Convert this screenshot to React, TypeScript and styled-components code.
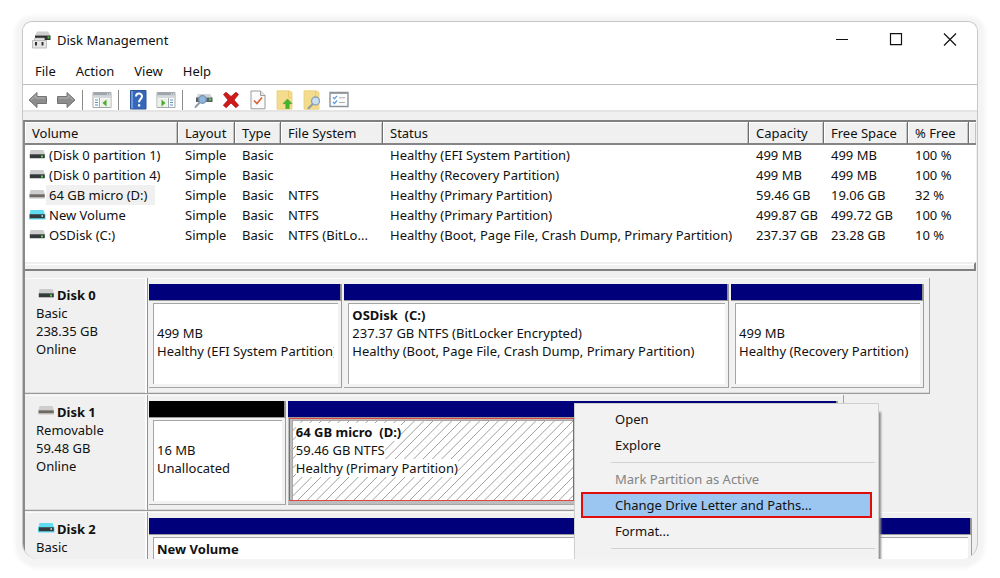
import React from 'react';
import styled, { createGlobalStyle, css } from 'styled-components';

const Global = createGlobalStyle`
  *, *::before, *::after { box-sizing: border-box; }
  body {
    margin: 0;
    background: #fff;
    color: #111;
    font: 13px/18px "Noto Sans", "Open Sans", sans-serif;
  }
  button { margin: 0; padding: 0; border: 0; background: none; color: inherit; font: inherit; }
  svg { display: block; flex: none; }
`;

const Desktop = styled.div`
  display: flex;
  height: 100vh;
  padding: 21px 22px 19px;
`;

const Window = styled.main`
  position: relative;
  display: flex;
  flex: 1;
  flex-direction: column;
  min-width: 0;
  overflow: hidden;
  border: 1px solid #c6c6c6;
  border-bottom: 0;
  border-radius: 10px 10px 16px 16px;
  background: #f0f0f0;
  box-shadow: 0 2px 4px 7px #f4f4f4;
`;

const TitleBar = styled.header`
  display: flex;
  flex: none;
  align-items: center;
  gap: 6px;
  height: 35px;
  padding-left: 9px;
  background: #fff;
`;

const Title = styled.h1`
  flex: 1;
  margin: 0;
  font-size: 13px;
  font-weight: 400;
`;

const WindowControls = styled.div`
  display: flex;
`;

const WindowButton = styled.button`
  display: grid;
  place-items: center;
  width: 54px;
  height: 35px;
`;

const MenuBar = styled.nav`
  display: flex;
  flex: none;
  height: 28px;
  padding-left: 2px;
  border-bottom: 1px solid #bdbdbd;
  background: #fff;
`;

const MenuBarItem = styled.button`
  padding: 0 10px;
`;

const Toolbar = styled.div`
  display: flex;
  flex: none;
  align-items: center;
  height: 27px;
  padding: 4px 0 0 1px;
  border-bottom: 2px solid #e4e4e4;
  background: #fff;
`;

const ToolGroup = styled.div<{ $tight?: boolean }>`
  display: grid;
  grid-auto-flow: column;
  grid-auto-columns: ${p => (p.$tight ? 27 : 28)}px;
  padding-left: ${p => (p.$tight ? 2 : 0)}px;
`;

const ToolDivider = styled.div`
  width: 1px;
  height: 20px;
  margin: 0 5px 0 2px;
  background: #8c8c8c;
`;

const ToolButton = styled.button`
  display: grid;
  place-items: center;
  height: 20px;
`;

const Frame = styled.section`
  display: flex;
  flex: 1;
  flex-direction: column;
  min-height: 0;
  margin: 8px 1px 0 0;
  border-top: 2px solid #808080;
  border-left: 2px solid #8a8a8a;
`;

const VolumeList = styled.div`
  flex: none;
  min-height: 140px;
  background: #fff;
`;

const VolumeTable = styled.table`
  width: 100%;
  border-collapse: separate;
  border-spacing: 0;
  table-layout: fixed;
`;

const Column = styled.col<{ $width?: number }>`
  ${p => p.$width && css`width: ${p.$width}px;`}
`;

const HeadCell = styled.th`
  height: 23px;
  padding: 0 0 0 7px;
  border-right: 1px solid #6f6f6f;
  border-bottom: 2px solid #858585;
  background: #f0f0f0;
  box-shadow: inset 1px 1px #fff, inset -1px 0 #c4c4c4;
  font-weight: 400;
  text-align: left;
  white-space: nowrap;

  &:last-child { border-right: 0; }
`;

const Cell = styled.td`
  height: 20px;
  padding: 0 0 0 7px;
  overflow: hidden;
  white-space: nowrap;
`;

const VolumeCell = styled(Cell)`
  padding-left: 4px;
`;

const VolumeName = styled.div`
  display: flex;
  align-items: center;
`;

const VolumeLabel = styled.span<{ $selected: boolean }>`
  padding: 1px 8px 1px 3px;
  background: ${p => (p.$selected ? '#f0f0f0' : 'transparent')};
`;

const Splitter = styled.div`
  flex: none;
  height: 9px;
  border-top: 2px solid #efefef;
  border-right: 2px solid #808080;
  border-bottom: 2px solid #808080;
  background: #f0f0f0;
  box-shadow: inset 0 1px #fff;
`;

const DiskList = styled.div`
  display: flex;
  flex: 1;
  flex-direction: column;
  gap: 1px;
  min-height: 0;
  padding-top: 7px;
`;

const DiskRow = styled.article`
  display: flex;
  flex: none;
`;

const DiskInfo = styled.div`
  flex: none;
  width: 123px;
  height: 116px;
  padding: 8px 0 0 11px;
  border-right: 1px solid #939393;
  border-bottom: 1px solid #9a9a9a;
  box-shadow: inset -2px 1px #fbfbfb, inset 0 -1px #dadada;
`;

const DiskName = styled.h2`
  display: flex;
  gap: 2px;
  margin: 0;
  padding-left: 2px;
  font-size: 13px;
  font-weight: 700;

  svg { margin-top: 2px; }
`;

const InfoLine = styled.div`
  height: 18px;
`;

const Partitions = styled.div<{ $share: number; $flush?: boolean }>`
  display: flex;
  flex: ${p => p.$share} 1 0;
  gap: 2px;
  min-width: 0;
  padding: 6px 5px 5px 1px;
  border-right: 1px solid #a0a0a0;
  border-bottom: 1px solid #9a9a9a;
  box-shadow: inset 0 1px #fbfbfb, inset 0 -1px #dadada;
  ${p => p.$flush && css`
    padding-right: 0;
    border-right: 0;
  `}
`;

const Unused = styled.div<{ $share: number }>`
  flex: ${p => p.$share} 1 0;
`;

const Partition = styled.div<{ $share: number }>`
  display: flex;
  flex: ${p => p.$share} 1 0;
  flex-direction: column;
  min-width: 0;
  border-right: 1px solid #9c9c9c;
  border-bottom: 1px solid #a6a6a6;
`;

const PartitionBar = styled.div<{ $allocated: boolean }>`
  height: 17px;
  border-right: 1px solid #8f8f8f;
  border-bottom: 1px solid #9a9a9a;
  background: ${p => (p.$allocated ? '#00007b' : '#000')};
`;

const PartitionBody = styled.div<{ $selected: boolean }>`
  position: relative;
  display: flex;
  flex: 1;
  padding: 2px 3px 3px 4px;
  background: ${p => (p.$selected ? '#bdbdbd' : '#f2f2f2')};
`;

const PartitionInner = styled.div`
  position: relative;
  flex: 1;
  min-width: 0;
  padding: 2px 4px 0 3px;
  border-top: 1px solid #a6a6a6;
  border-left: 1px solid #a6a6a6;
  background: #fff;
`;

const PartitionLine = styled.div<{ $bold?: boolean }>`
  position: relative;
  height: 18px;
  overflow: hidden;
  font-weight: ${p => (p.$bold ? 700 : 400)};
  white-space: pre;
`;

const LineText = styled.span`
  display: inline-block;
  background: #fff;
`;

const HatchSvg = styled.svg`
  position: absolute;
  inset: 0;
  width: 100%;
  height: 100%;
`;

const SelectionOutline = styled.div`
  position: absolute;
  top: 0;
  left: 1px;
  width: 285px;
  height: 83px;
  border: 1px solid #e2433c;
`;

const ContextMenu = styled.div`
  position: absolute;
  top: 381px;
  left: 551px;
  width: 305px;
  min-height: 170px;
  padding: 2px 2px 2px 6px;
  border: 1px solid #cfcfcf;
  background: #f2f2f2;
  box-shadow: 3px 8px 2px -1px #8e8e8e;
`;

const ContextItem = styled.button<{ $active?: boolean }>`
  display: block;
  width: 291px;
  height: 26px;
  padding-left: 32px;
  border: 2px solid transparent;
  text-align: left;
  white-space: nowrap;

  &:disabled { color: #838383; }

  ${p => p.$active && css`
    border-color: #e00b0b;
    background: #9bc6f2;
  `}
`;

const ContextDivider = styled.hr`
  height: 1px;
  margin: 4px 1px 3px 30px;
  border: 0;
  background: #d2d2d2;
`;

type DriveKind = 'fixed' | 'removable' | 'new';

function DriveIcon({ kind }: { kind: DriveKind }) {
  const top = kind === 'new' ? '#5fdcf2' : '#cdcdcd';
  const front = kind === 'removable' ? '#6d6964' : '#343a3c';
  return (
    <svg width="17" height="12" viewBox="0 0 17 12" aria-hidden="true">
      <path d="M1.500 1h13L16 5.500H.5z" fill={top} />
      {kind === 'new' && <path d="M0 5h16.500v5.500H0z" fill={top} />}
      <path d={kind === 'removable' ? 'M.5 5.300h15.300v3.200H.5z' : 'M.8 5.300h15v4H.8z'} fill={front} />
      {kind === 'removable' && <path d="M.5 8.500h15.300v1H.5z" fill="#c4c0bc" />}
      {kind === 'fixed' && <path d="M12 6.500h2v2h-2z" fill="#58d644" />}
      {kind === 'new' && <path d="M12.500 6.300h1.500v1.500h-1.500z" fill="#d9f8ff" />}
    </svg>
  );
}

function AppIcon() {
  return (
    <svg width="19" height="18" viewBox="0 0 19 18" aria-hidden="true">
      <path d="M5 .5h11l2.500 4H3z" fill="#cfcfcf" />
      <path d="M3 4.500h15.500V9H3z" fill="#2e3032" />
      <path d="M15.500 5.500h2v2h-2z" fill="#46d33c" />
      <path d="M2.500 7h10v3.500h-10z" fill="#e2e2e2" stroke="#b4b4b4" strokeWidth=".6" />
      <path d="M.5 9.500h14v7.500H.5z" fill="#e6e6e6" stroke="#b0b0b0" strokeWidth=".8" />
      <path d="M3 11h2v3.500H3zM9.500 11h2v3.500h-2z" fill="#333" />
    </svg>
  );
}

function ArrowIcon({ back }: { back?: boolean }) {
  return (
    <svg width="20" height="18" viewBox="0 0 20 18" aria-hidden="true">
      <g transform={back ? undefined : 'matrix(-1 0 0 1 20 0)'}>
        <path d="M1 9 9 1.500v4h9.500v7H9v4z" fill="#8c8c8c" stroke="#747474" strokeLinejoin="round" />
        <path d="M3 9l5-4.500V7h9" fill="none" stroke="#b4b4b4" />
      </g>
    </svg>
  );
}

function PaneIcon({ right }: { right?: boolean }) {
  return (
    <svg width="20" height="18" viewBox="0 0 20 18" aria-hidden="true">
      <path d="M1 1.500h18v15H1z" fill="#fff" stroke="#a3a8ad" />
      <path d="M1.500 2h17v2.500h-17z" fill="#9fa6ad" />
      <path d="M1.500 5h17v2h-17z" fill="#d5d8db" />
      <path d="M15 3h1M17 3h1" stroke="#fff" />
      <g transform={right ? 'matrix(-1 0 0 1 20 0)' : undefined}>
        <path d="M7.500 7v9" stroke="#a3a8ad" />
        <path d="M3 9h3M3 11.500h3M3 14h3" stroke="#5590c4" />
        <path d="M8.500 7.500h10v8.500h-10z" fill="#edf1ea" />
        <path d="M14.500 8.500v7L10.500 12z" fill="#47ad2d" />
      </g>
    </svg>
  );
}

function HelpIcon() {
  return (
    <svg width="17" height="20" viewBox="0 0 17 20" aria-hidden="true">
      <path d="M.5.5h15.500v18.500H.5z" fill="#3768b8" stroke="#2c5699" />
      <path d="M1 1h2v17.500H1z" fill="#6b98dc" />
      <path d="M6 6.500C6 2.500 12 2.700 12 6.300c0 2.700-3 2.700-3 6" fill="none" stroke="#fff" strokeWidth="2" />
      <path d="M8 14.300h2.200v2.200H8z" fill="#fff" />
    </svg>
  );
}

function DiskSearchIcon() {
  return (
    <svg width="20" height="18" viewBox="0 0 20 18" aria-hidden="true">
      <path d="M4 3h12l2.500 3.500H2z" fill="#d3d3d3" />
      <path d="M2 6.500h16.500V11H2z" fill="#5a6063" />
      <path d="M15 7.500h2v2h-2z" fill="#4fd441" />
      <circle cx="8.500" cy="8.500" r="3.800" fill="#8fb6dc" stroke="#7290b0" strokeWidth="1.200" />
      <path d="M5.700 11.500 1.500 16" stroke="#929ca8" strokeWidth="2" strokeLinecap="round" />
    </svg>
  );
}

function DeleteIcon() {
  return (
    <svg width="18" height="18" viewBox="0 0 18 18" aria-hidden="true">
      <path d="M1.500 3.500 4 1.200l5 4.300 5-4.300 2.500 2.300L12 9l4.700 5.300-2.900 2.400L9 12l-4.800 4.700-2.900-2.400L6 9z" fill="#cf1b1b" stroke="#a01010" strokeWidth=".7" />
    </svg>
  );
}

function PageCheckIcon() {
  return (
    <svg width="16" height="20" viewBox="0 0 16 20" aria-hidden="true">
      <path d="M1 1h9.500L15 5.500v13.300H1z" fill="#fbfbfb" stroke="#9b9b9b" />
      <path d="M10.500 1v4.500H15" fill="#e6e6e6" stroke="#9b9b9b" />
      <path d="m4 10.500 3 3L12 7.500" fill="none" stroke="#e0633a" strokeWidth="1.700" />
    </svg>
  );
}

function FolderShape() {
  return (
    <>
      <path d="M1 .8h12l3 1.500v16.900H1z" fill="#f3dc8e" stroke="#e8cd7c" strokeWidth=".8" />
      <path d="M12.500 1v6l3 1" fill="none" stroke="#e9ca6c" />
    </>
  );
}

function FolderUpIcon() {
  return (
    <svg width="17" height="20" viewBox="0 0 17 20" aria-hidden="true">
      <FolderShape />
      <path d="M11.500 9 16 13.700h-2.800V18.500H9.800v-4.800H7z" fill="#45b52e" stroke="#379924" strokeWidth=".5" />
    </svg>
  );
}

function FolderSearchIcon() {
  return (
    <svg width="18" height="20" viewBox="0 0 18 20" aria-hidden="true">
      <FolderShape />
      <circle cx="12.500" cy="11" r="4" fill="#c9e0f2" stroke="#8ba2b8" strokeWidth="1.300" />
      <path d="m9.500 14.200-4 4" stroke="#909aa6" strokeWidth="2" strokeLinecap="round" />
    </svg>
  );
}

function ChecklistIcon() {
  return (
    <svg width="20" height="17" viewBox="0 0 20 17" aria-hidden="true">
      <path d="M1 1.500h18v14H1z" fill="#fcfcfc" stroke="#8b9298" strokeWidth="1.400" />
      <path d="M1.500 2.500h17" stroke="#9aa1a7" />
      <path d="m4 6.300 1.500 1.500L8 4.800M4 11l1.500 1.500L8 9.500" fill="none" stroke="#5a9fdc" strokeWidth="1.300" />
      <path d="M10 6.800h6M10 11.500h6" stroke="#a9b0b5" />
    </svg>
  );
}

function Hatch() {
  return (
    <HatchSvg aria-hidden="true">
      <defs>
        <pattern id="hatch" width="28" height="28" patternUnits="userSpaceOnUse">
          <path
            d="M-2 2 2-2M-2 11.330 11.330-2M-2 20.670 20.670-2M-2 30 30-2M7.330 30 30 7.330M16.670 30 30 16.670M26 30 30 26"
            stroke="#a0a0a0"
            strokeWidth="1"
          />
        </pattern>
      </defs>
      <rect width="100%" height="100%" fill="url(#hatch)" />
    </HatchSvg>
  );
}

const columns: { name: string; width?: number }[] = [
  { name: 'Volume', width: 153 },
  { name: 'Layout', width: 57 },
  { name: 'Type', width: 46 },
  { name: 'File System', width: 102 },
  { name: 'Status', width: 366 },
  { name: 'Capacity', width: 75 },
  { name: 'Free Space', width: 84 },
  { name: '% Free', width: 61 },
  { name: '' },
];

interface Volume {
  name: string;
  kind: DriveKind;
  fs: string;
  status: string;
  capacity: string;
  free: string;
  percent: string;
  selected?: boolean;
}

const volumes: Volume[] = [
  { name: '(Disk 0 partition 1)', kind: 'fixed', fs: '', status: 'Healthy (EFI System Partition)', capacity: '499 MB', free: '499 MB', percent: '100 %' },
  { name: '(Disk 0 partition 4)', kind: 'fixed', fs: '', status: 'Healthy (Recovery Partition)', capacity: '499 MB', free: '499 MB', percent: '100 %' },
  { name: '64 GB micro (D:)', kind: 'removable', fs: 'NTFS', status: 'Healthy (Primary Partition)', capacity: '59.46 GB', free: '19.06 GB', percent: '32 %', selected: true },
  { name: 'New Volume', kind: 'new', fs: 'NTFS', status: 'Healthy (Primary Partition)', capacity: '499.87 GB', free: '499.72 GB', percent: '100 %' },
  { name: 'OSDisk (C:)', kind: 'fixed', fs: 'NTFS (BitLo...', status: 'Healthy (Boot, Page File, Crash Dump, Primary Partition)', capacity: '237.37 GB', free: '23.28 GB', percent: '10 %' },
];

interface PartitionData {
  share: number;
  lines: [string, string, string];
  unallocated?: boolean;
  selected?: boolean;
}

interface Disk {
  name: string;
  kind: DriveKind;
  info: string[];
  share: number;
  unused: number;
  flush?: boolean;
  partitions: PartitionData[];
}

const disks: Disk[] = [
  {
    name: 'Disk 0', kind: 'fixed', info: ['Basic', '238.35 GB', 'Online'], share: 782, unused: 46,
    partitions: [
      { share: 193, lines: ['', '499 MB', 'Healthy (EFI System Partition)'] },
      { share: 385, lines: ['OSDisk  (C:)', '237.37 GB NTFS (BitLocker Encrypted)', 'Healthy (Boot, Page File, Crash Dump, Primary Partition)'] },
      { share: 193, lines: ['', '499 MB', 'Healthy (Recovery Partition)'] },
    ],
  },
  {
    name: 'Disk 1', kind: 'removable', info: ['Removable', '59.48 GB', 'Online'], share: 695, unused: 133,
    partitions: [
      { share: 136, lines: ['', '16 MB', 'Unallocated'], unallocated: true },
      { share: 550, lines: ['64 GB micro  (D:)', '59.46 GB NTFS', 'Healthy (Primary Partition)'], selected: true },
    ],
  },
  {
    name: 'Disk 2', kind: 'new', info: ['Basic'], share: 824, unused: 4, flush: true,
    partitions: [{ share: 1, lines: ['New Volume', '', ''] }],
  },
];

function PartitionBlock({ data }: { data: PartitionData }) {
  const selected = !!data.selected;
  return (
    <Partition $share={data.share}>
      <PartitionBar $allocated={!data.unallocated} />
      <PartitionBody $selected={selected}>
        <PartitionInner>
          {selected && <Hatch />}
          {data.lines.map((line, i) => (
            <PartitionLine key={i} $bold={i === 0}>
              <LineText>{line}</LineText>
            </PartitionLine>
          ))}
        </PartitionInner>
        {selected && <SelectionOutline />}
      </PartitionBody>
    </Partition>
  );
}

export default function App() {
  return (
    <Desktop>
      <Global />
      <Window>
        <TitleBar>
          <AppIcon />
          <Title>Disk Management</Title>
          <WindowControls>
            <WindowButton aria-label="Minimize">
              <svg width="14" height="14" viewBox="0 0 14 14"><path d="M1 6.500h12" stroke="#111" strokeWidth="1.200" /></svg>
            </WindowButton>
            <WindowButton aria-label="Maximize">
              <svg width="14" height="14" viewBox="0 0 14 14"><path d="M1.500.700h11v11h-11z" fill="none" stroke="#111" strokeWidth="1.200" /></svg>
            </WindowButton>
            <WindowButton aria-label="Close">
              <svg width="14" height="14" viewBox="0 0 14 14"><path d="m1 .5 12 12M13 .5 1 12.500" stroke="#111" strokeWidth="1.200" /></svg>
            </WindowButton>
          </WindowControls>
        </TitleBar>

        <MenuBar>
          {['File', 'Action', 'View', 'Help'].map(item => <MenuBarItem key={item}>{item}</MenuBarItem>)}
        </MenuBar>

        <Toolbar>
          <ToolGroup>
            <ToolButton aria-label="Back"><ArrowIcon back /></ToolButton>
            <ToolButton aria-label="Forward"><ArrowIcon /></ToolButton>
          </ToolGroup>
          <ToolDivider />
          <ToolGroup>
            <ToolButton aria-label="Console tree"><PaneIcon /></ToolButton>
          </ToolGroup>
          <ToolDivider />
          <ToolGroup>
            <ToolButton aria-label="Help topics"><HelpIcon /></ToolButton>
            <ToolButton aria-label="Action pane"><PaneIcon right /></ToolButton>
          </ToolGroup>
          <ToolDivider />
          <ToolGroup $tight>
            <ToolButton aria-label="Rescan disks"><DiskSearchIcon /></ToolButton>
            <ToolButton aria-label="Delete"><DeleteIcon /></ToolButton>
            <ToolButton aria-label="Properties"><PageCheckIcon /></ToolButton>
            <ToolButton aria-label="Open folder"><FolderUpIcon /></ToolButton>
            <ToolButton aria-label="Explore folder"><FolderSearchIcon /></ToolButton>
            <ToolButton aria-label="Settings"><ChecklistIcon /></ToolButton>
          </ToolGroup>
        </Toolbar>

        <Frame>
          <VolumeList>
            <VolumeTable>
              <colgroup>
                {columns.map(c => <Column key={c.name} $width={c.width} />)}
              </colgroup>
              <thead>
                <tr>{columns.map(c => <HeadCell key={c.name}>{c.name}</HeadCell>)}</tr>
              </thead>
              <tbody>
                {volumes.map(v => (
                  <tr key={v.name}>
                    <VolumeCell>
                      <VolumeName>
                        <DriveIcon kind={v.kind} />
                        <VolumeLabel $selected={!!v.selected}>{v.name}</VolumeLabel>
                      </VolumeName>
                    </VolumeCell>
                    <Cell>Simple</Cell>
                    <Cell>Basic</Cell>
                    <Cell>{v.fs}</Cell>
                    <Cell>{v.status}</Cell>
                    <Cell>{v.capacity}</Cell>
                    <Cell>{v.free}</Cell>
                    <Cell>{v.percent}</Cell>
                    <Cell />
                  </tr>
                ))}
              </tbody>
            </VolumeTable>
          </VolumeList>
          <Splitter />
          <DiskList>
            {disks.map(d => (
              <DiskRow key={d.name}>
                <DiskInfo>
                  <DiskName><DriveIcon kind={d.kind} />{d.name}</DiskName>
                  {d.info.map(line => <InfoLine key={line}>{line}</InfoLine>)}
                </DiskInfo>
                <Partitions $share={d.share} $flush={d.flush}>
                  {d.partitions.map((p, i) => <PartitionBlock key={i} data={p} />)}
                </Partitions>
                <Unused $share={d.unused} />
              </DiskRow>
            ))}
          </DiskList>
        </Frame>

        <ContextMenu>
          <ContextItem>Open</ContextItem>
          <ContextItem>Explore</ContextItem>
          <ContextDivider />
          <ContextItem disabled>Mark Partition as Active</ContextItem>
          <ContextItem $active>Change Drive Letter and Paths...</ContextItem>
          <ContextItem>Format...</ContextItem>
          <ContextDivider />
        </ContextMenu>
      </Window>
    </Desktop>
  );
}
